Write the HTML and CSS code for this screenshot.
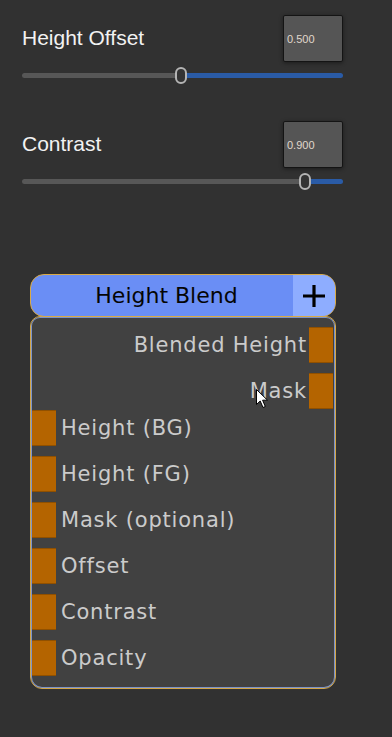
FILE: index.html
```html
<!DOCTYPE html>
<html lang="en">
<head>
    <meta charset="UTF-8">
    <meta name="viewport" content="width=device-width, initial-scale=1.0">
    <title>Height Blend</title>
    <link rel="stylesheet" href="styles.css">
</head>
<body>
    <div class="params">
        <!-- Height Offset -->
        <div class="param">
            <div class="param-head">
                <span class="param-label">Height Offset</span>
                <div class="value-box">0.500</div>
            </div>
            <div class="slider">
                <div class="track-left" style="width: 159px"></div>
                <div class="thumb"></div>
                <div class="track-right"></div>
            </div>
        </div>

        <!-- Contrast -->
        <div class="param">
            <div class="param-head">
                <span class="param-label">Contrast</span>
                <div class="value-box">0.900</div>
            </div>
            <div class="slider">
                <div class="track-left" style="width: 283px"></div>
                <div class="thumb"></div>
                <div class="track-right"></div>
            </div>
        </div>
    </div>

    <!-- Node -->
    <div class="node">
        <div class="node-header">
            <span class="node-title">Height Blend</span>
            <div class="node-add">
                <svg width="22" height="22" viewBox="0 0 22 22">
                    <path d="M11 0 V22 M0 11 H22" stroke="#000" stroke-width="3.2"/>
                </svg>
            </div>
        </div>
        <div class="node-body">
            <div class="ports">
                <div class="port-row out">
                    <span class="port-label">Blended Height</span>
                    <div class="port"></div>
                </div>
                <div class="port-row out">
                    <span class="port-label">Mask</span>
                    <div class="port"></div>
                </div>
            </div>
            <div class="ports inputs">
                <div class="port-row in">
                    <div class="port"></div>
                    <span class="port-label">Height (BG)</span>
                </div>
                <div class="port-row in">
                    <div class="port"></div>
                    <span class="port-label">Height (FG)</span>
                </div>
                <div class="port-row in">
                    <div class="port"></div>
                    <span class="port-label">Mask (optional)</span>
                </div>
                <div class="port-row in">
                    <div class="port"></div>
                    <span class="port-label">Offset</span>
                </div>
                <div class="port-row in">
                    <div class="port"></div>
                    <span class="port-label">Contrast</span>
                </div>
                <div class="port-row in">
                    <div class="port"></div>
                    <span class="port-label">Opacity</span>
                </div>
            </div>
        </div>
    </div>

    <!-- Mouse cursor -->
    <svg class="cursor" width="13" height="20" viewBox="0 0 13 20">
        <path d="M0.5 0.5 L0.5 15.5 L4.2 12 L7 18.5 L9.3 17.5 L6.6 11.2 L11.5 11.2 Z" fill="#fff" stroke="#000" stroke-width="1"/>
    </svg>
</body>
</html>
```

FILE: styles.css
```css
body {
    margin: 0;
    background-color: #313131;
    font-family: "Liberation Sans", Arial, sans-serif;
    position: relative;
    height: 737px;
    overflow: hidden;
}
.params {
    padding: 15px 49px 0 22px;
    display: flex;
    flex-direction: column;
    gap: 37px;
}
.param-head {
    display: flex;
    justify-content: space-between;
    align-items: center;
}
.param-label {
    color: #f2f2f2;
    font-size: 21px;
    margin-top: -1px;
}
.value-box {
    width: 60px;
    height: 47px;
    box-sizing: border-box;
    background-color: #555555;
    border: 1px solid #141414;
    border-radius: 2px;
    box-shadow: 0 1px 4px rgba(0, 0, 0, 0.45);
    color: #e0d8cc;
    font-size: 11px;
    display: flex;
    align-items: center;
    padding-left: 3px;
}
.slider {
    margin-top: 5px;
    height: 17px;
    display: flex;
    align-items: center;
}
.track-left {
    height: 5px;
    background-color: #575757;
    border-radius: 3px 0 0 3px;
}
.track-right {
    flex: 1;
    height: 5px;
    background-color: #2a5ba6;
    border-radius: 0 3px 3px 0;
}
.thumb {
    width: 12px;
    height: 17px;
    box-sizing: border-box;
    border: 2px solid #b4b4b4;
    border-radius: 6px;
    background-color: #333333;
    margin: 0 -6px;
    position: relative;
    z-index: 1;
}
.node {
    margin: 84px 0 0 30px;
    width: 306px;
    font-family: "DejaVu Sans", Verdana, sans-serif;
}
.node-header {
    height: 43px;
    box-sizing: border-box;
    display: flex;
    background-color: #6a8ef5;
    border: 1px solid #d9aa45;
    border-radius: 14px;
    overflow: hidden;
    position: relative;
    z-index: 1;
}
.node-title {
    flex: 1;
    text-align: center;
    padding-left: 9px;
    line-height: 41px;
    font-size: 22px;
    color: #050505;
}
.node-add {
    width: 42px;
    background-color: #8eadff;
    display: flex;
    align-items: center;
    justify-content: center;
}
.node-body {
    margin-top: -1px;
    background-color: #414141;
    border: 1px solid #d3a648;
    box-shadow: inset 0 0 0 1px #7c93c9;
    border-radius: 10px 10px 12px 12px;
    padding: 10px 2px 12px 1px;
}
.ports {
    display: flex;
    flex-direction: column;
    gap: 10px;
}
.inputs {
    margin-top: 1px;
}
.port-row {
    height: 36px;
    display: flex;
    align-items: center;
}
.port-row.out {
    justify-content: flex-end;
}
.port {
    width: 24px;
    height: 36px;
    background-color: #b46400;
    box-shadow: inset 0 1px 0 rgba(0, 0, 0, 0.2), inset 0 -1px 0 rgba(0, 0, 0, 0.2);
}
.port-label {
    color: #cbcbcb;
    font-size: 21px;
    letter-spacing: 0.8px;
}
.out .port-label {
    margin-right: 2px;
}
.in .port-label {
    margin-left: 5px;
}
.cursor {
    position: absolute;
    left: 256px;
    top: 389px;
}
```
